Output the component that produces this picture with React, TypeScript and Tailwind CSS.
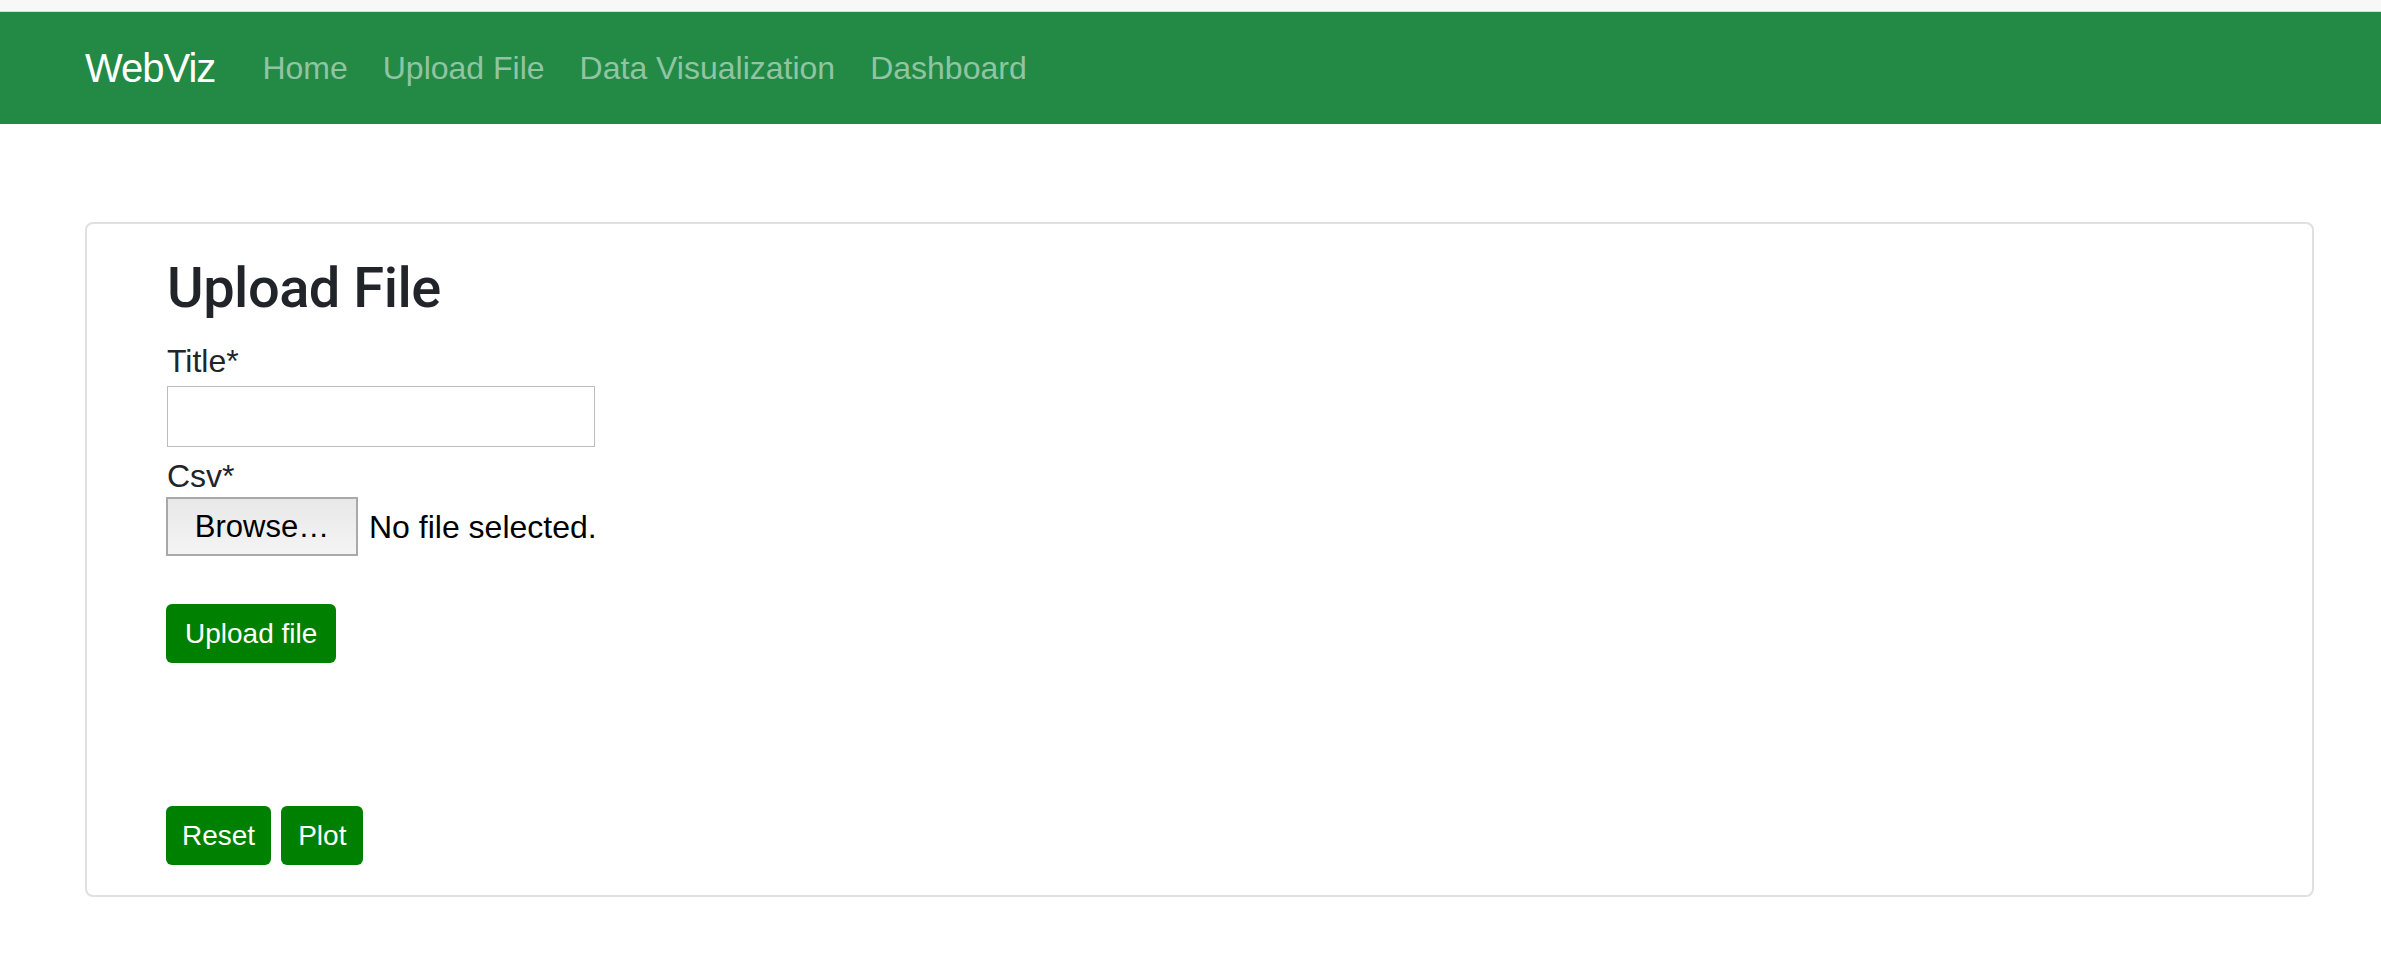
export default function App() {
  return (
    <div className="min-h-[957px] bg-white font-['Liberation_Sans',Arial,sans-serif] text-[#212529]">
      <div className="h-[12px] bg-[#f8f8f8] border-b border-[#dcdcdc]" />
      <nav className="h-[112px] bg-[#238a46] flex items-center pl-[85px]">
        <span className="text-white text-[40px] leading-[60px] tracking-[-1px] mr-[47px]">WebViz</span>
        <div className="flex gap-[35px] text-[32px] leading-[48px] text-[#91c4a2]">
          <span>Home</span>
          <span>Upload File</span>
          <span>Data Visualization</span>
          <span>Dashboard</span>
        </div>
      </nav>
      <div className="mt-[98px] ml-[85px] mr-[67px] border-2 border-[#e0e0e0] rounded-[8px] pt-[31px] pl-[80px] pb-[30px]">
        <h2 className="text-[56px] leading-[67px] font-medium font-['Roboto',Arial,sans-serif] tracking-[-0.5px]">Upload File</h2>
        <div className="mt-[17px] text-[32px] leading-[44px]">Title*</div>
        <input type="text" className="mt-[3px] block w-[428px] h-[61px] border border-[#bdbdbd] outline-none" />
        <div className="mt-[8px] text-[32px] leading-[42px]">Csv*</div>
        <div className="flex items-center">
          <button className="ml-[-1px] w-[192px] h-[59px] border-2 border-[#a9a9a9] bg-gradient-to-b from-[#e8e8e8] to-[#f4f4f4] text-black text-[31px] leading-none">Browse…</button>
          <span className="ml-[11px] text-black text-[32px]">No file selected.</span>
        </div>
        <button className="mt-[48px] ml-[-1px] block h-[59px] px-[19px] bg-[#008000] rounded-[6px] text-white text-[28px] leading-[42px]">Upload file</button>
        <div className="mt-[143px] ml-[-1px] flex gap-[10px]">
          <button className="h-[59px] px-[16px] bg-[#008000] rounded-[6px] text-white text-[28px] leading-[42px]">Reset</button>
          <button className="h-[59px] px-[17px] bg-[#008000] rounded-[6px] text-white text-[28px] leading-[42px]">Plot</button>
        </div>
      </div>
    </div>
  );
}
